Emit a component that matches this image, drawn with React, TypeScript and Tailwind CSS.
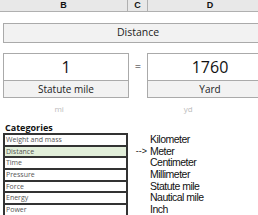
import React from "react";

const cats = ["Weight and mass", "Distance", "Time", "Pressure", "Force", "Energy", "Power"];
const units = ["Kilometer", "Meter", "Centimeter", "Millimeter", "Statute mile", "Nautical mile", "Inch"];

export default function App() {
  return (
    <div className="w-[258px] h-[215px] overflow-hidden bg-white relative" style={{ fontFamily: '"Open Sans", "Liberation Sans", sans-serif' }}>
      <div className="h-[12px] bg-[#e8e8e8] border-b border-[#b0b0b0] flex text-[9px] leading-[11px] text-[#111] font-semibold" style={{ fontFamily: '"Liberation Sans", sans-serif' }}>
        <div className="w-[128px] shrink-0 border-r border-[#b0b0b0] text-center">B</div>
        <div className="w-[20px] shrink-0 border-r border-[#b0b0b0] text-center">C</div>
        <div className="w-[124px] shrink-0 text-center">D</div>
      </div>
      <div className="mt-[11px] ml-[3px] w-[270px] h-[20px] border border-[#aaaaaa] bg-[#f2f2f2] flex items-center justify-center text-[10.5px] text-[#222]">
        Distance
      </div>
      <div className="mt-[10px] flex items-start">
        <div className="ml-[3px] w-[126px] shrink-0 border border-[#aaaaaa]">
          <div className="h-[26px] bg-white flex items-center justify-center text-[16px] text-[#111]">1</div>
          <div className="h-[17px] bg-[#f2f2f2] border-t border-[#aaaaaa] flex items-center justify-center text-[10px] text-[#222]">Statute mile</div>
        </div>
        <div className="w-[18px] shrink-0 h-[27px] flex items-center justify-center text-[11px] text-[#222]">=</div>
        <div className="w-[126px] shrink-0 border border-[#aaaaaa]">
          <div className="h-[26px] bg-white flex items-center justify-center text-[16px] text-[#111]">1760</div>
          <div className="h-[17px] bg-[#f2f2f2] border-t border-[#aaaaaa] flex items-center justify-center text-[10px] text-[#222]">Yard</div>
        </div>
      </div>
      <div className="flex mt-[5px] h-[12px] text-[8px] leading-[12px] text-[#bbbbbb]">
        <div className="w-[132px] text-center">mi</div>
        <div className="w-[156px] text-center">yd</div>
      </div>
      <div className="mt-[7px] flex">
        <div className="ml-[3px] w-[125px] shrink-0">
          <div className="h-[11px] pl-[2px] text-[9px] leading-[11px] font-bold text-[#111]">Categories</div>
          <div className="border-x-2 border-t-2 border-[#333]">
            {cats.map((c) => (
              <div
                key={c}
                className={`h-[11.7px] border-b-2 border-[#333] pl-[1px] text-[7px] leading-[9.7px] text-[#555] ${c === "Distance" ? "bg-[#e2efda]" : "bg-white"}`}
              >
                {c}
              </div>
            ))}
          </div>
        </div>
        <div className="pt-[12px] flex" style={{ fontFamily: '"Liberation Sans", sans-serif' }}>
          <div className="w-[22px] shrink-0">
            {units.map((u) => (
              <div key={u} className="h-[11.7px] text-[9px] leading-[11.7px] text-[#111] text-right pr-[3px]">
                {u === "Meter" ? "-->" : ""}
              </div>
            ))}
          </div>
          <div>
            {units.map((u) => (
              <div key={u} className="h-[11.7px] text-[10.5px] leading-[11.7px] text-[#111] tracking-[-0.5px] whitespace-nowrap">
                {u}
              </div>
            ))}
          </div>
        </div>
      </div>
    </div>
  );
}
